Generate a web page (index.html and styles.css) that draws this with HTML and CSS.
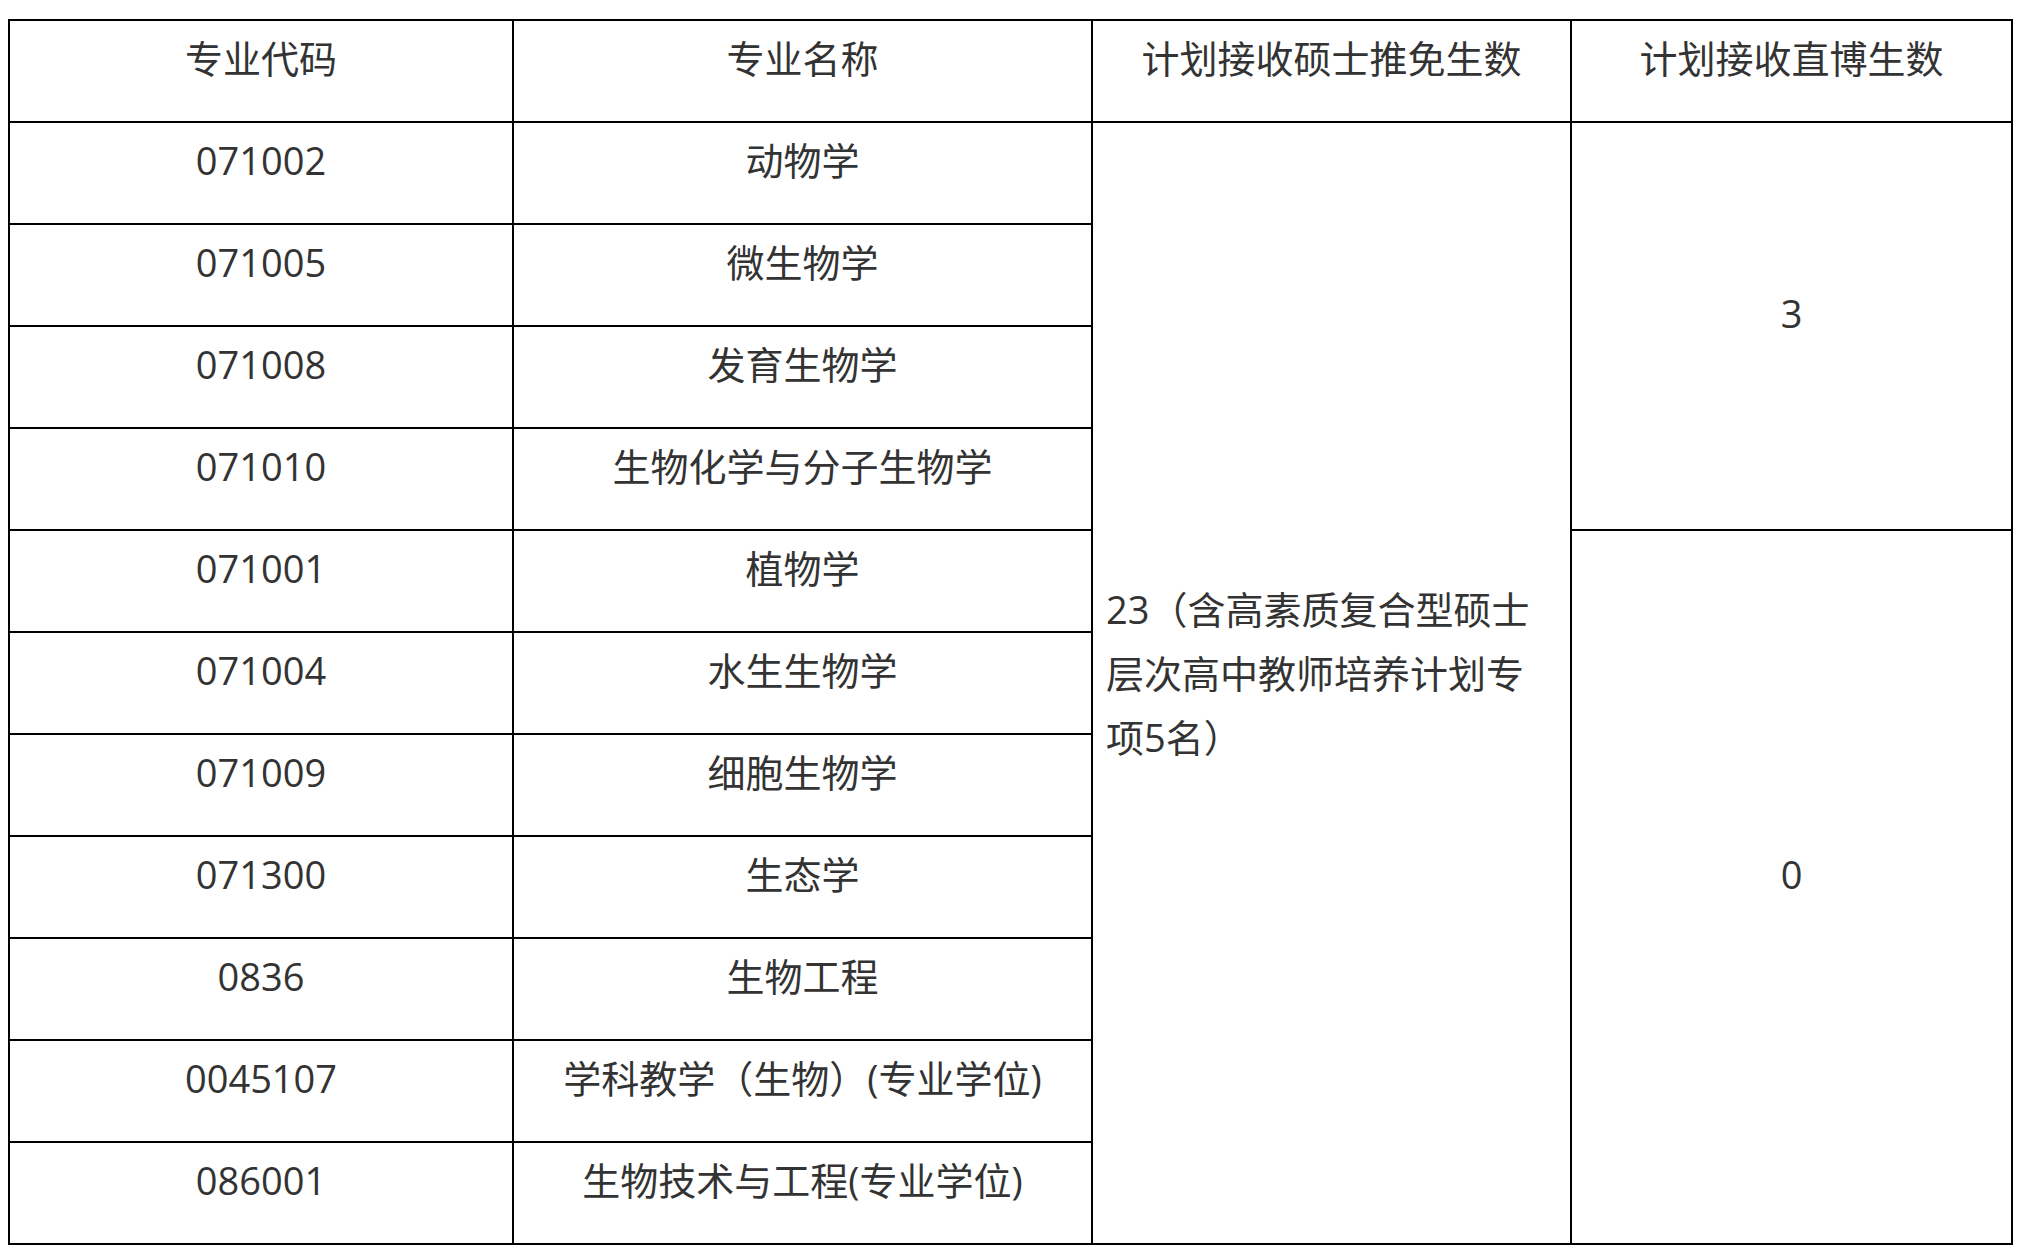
FILE: index.html
```html
<!DOCTYPE html>
<html lang="zh-CN">
<head>
<meta charset="utf-8">
<title>招生计划</title>
<link rel="stylesheet" href="styles.css">
</head>
<body>
<table class="plan">
  <colgroup>
    <col class="c1">
    <col class="c2">
    <col class="c3">
    <col class="c4">
  </colgroup>
  <tr class="row">
    <td>专业代码</td>
    <td>专业名称</td>
    <td>计划接收硕士推免生数</td>
    <td>计划接收直博生数</td>
  </tr>
  <tr class="row">
    <td>071002</td>
    <td>动物学</td>
    <td rowspan="11" class="note">23（含高素质复合型硕士层次高中教师培养计划专项5名）</td>
    <td rowspan="4">3</td>
  </tr>
  <tr class="row">
    <td>071005</td>
    <td>微生物学</td>
  </tr>
  <tr class="row">
    <td>071008</td>
    <td>发育生物学</td>
  </tr>
  <tr class="row">
    <td>071010</td>
    <td>生物化学与分子生物学</td>
  </tr>
  <tr class="row">
    <td>071001</td>
    <td>植物学</td>
    <td rowspan="7">0</td>
  </tr>
  <tr class="row">
    <td>071004</td>
    <td>水生生物学</td>
  </tr>
  <tr class="row">
    <td>071009</td>
    <td>细胞生物学</td>
  </tr>
  <tr class="row">
    <td>071300</td>
    <td>生态学</td>
  </tr>
  <tr class="row">
    <td>0836</td>
    <td>生物工程</td>
  </tr>
  <tr class="row">
    <td>0045107</td>
    <td>学科教学（生物）(专业学位)</td>
  </tr>
  <tr class="row">
    <td>086001</td>
    <td>生物技术与工程(专业学位)</td>
  </tr>
</table>
</body>
</html>
```
FILE: styles.css
```css
html, body {
  margin: 0;
  padding: 0;
  background: #ffffff;
}

body {
  font-family: "Open Sans", "Noto Sans CJK SC", sans-serif;
  font-size: 38px;
  color: #333333;
}

.plan {
  margin: 19px 0 0 8px;
  border-collapse: collapse;
  table-layout: fixed;
  width: 2005px;
}

.c1 { width: 504px; }
.c2 { width: 579px; }
.c3 { width: 479px; }
.c4 { width: 441px; }

.row {
  height: 102px;
}

.plan td {
  border: 2px solid #000000;
  padding: 0 13px 26px;
  line-height: 64px;
  text-align: center;
  vertical-align: middle;
  white-space: normal;
}

.plan td.note {
  text-align: left;
  padding-bottom: 20px;
}
```
